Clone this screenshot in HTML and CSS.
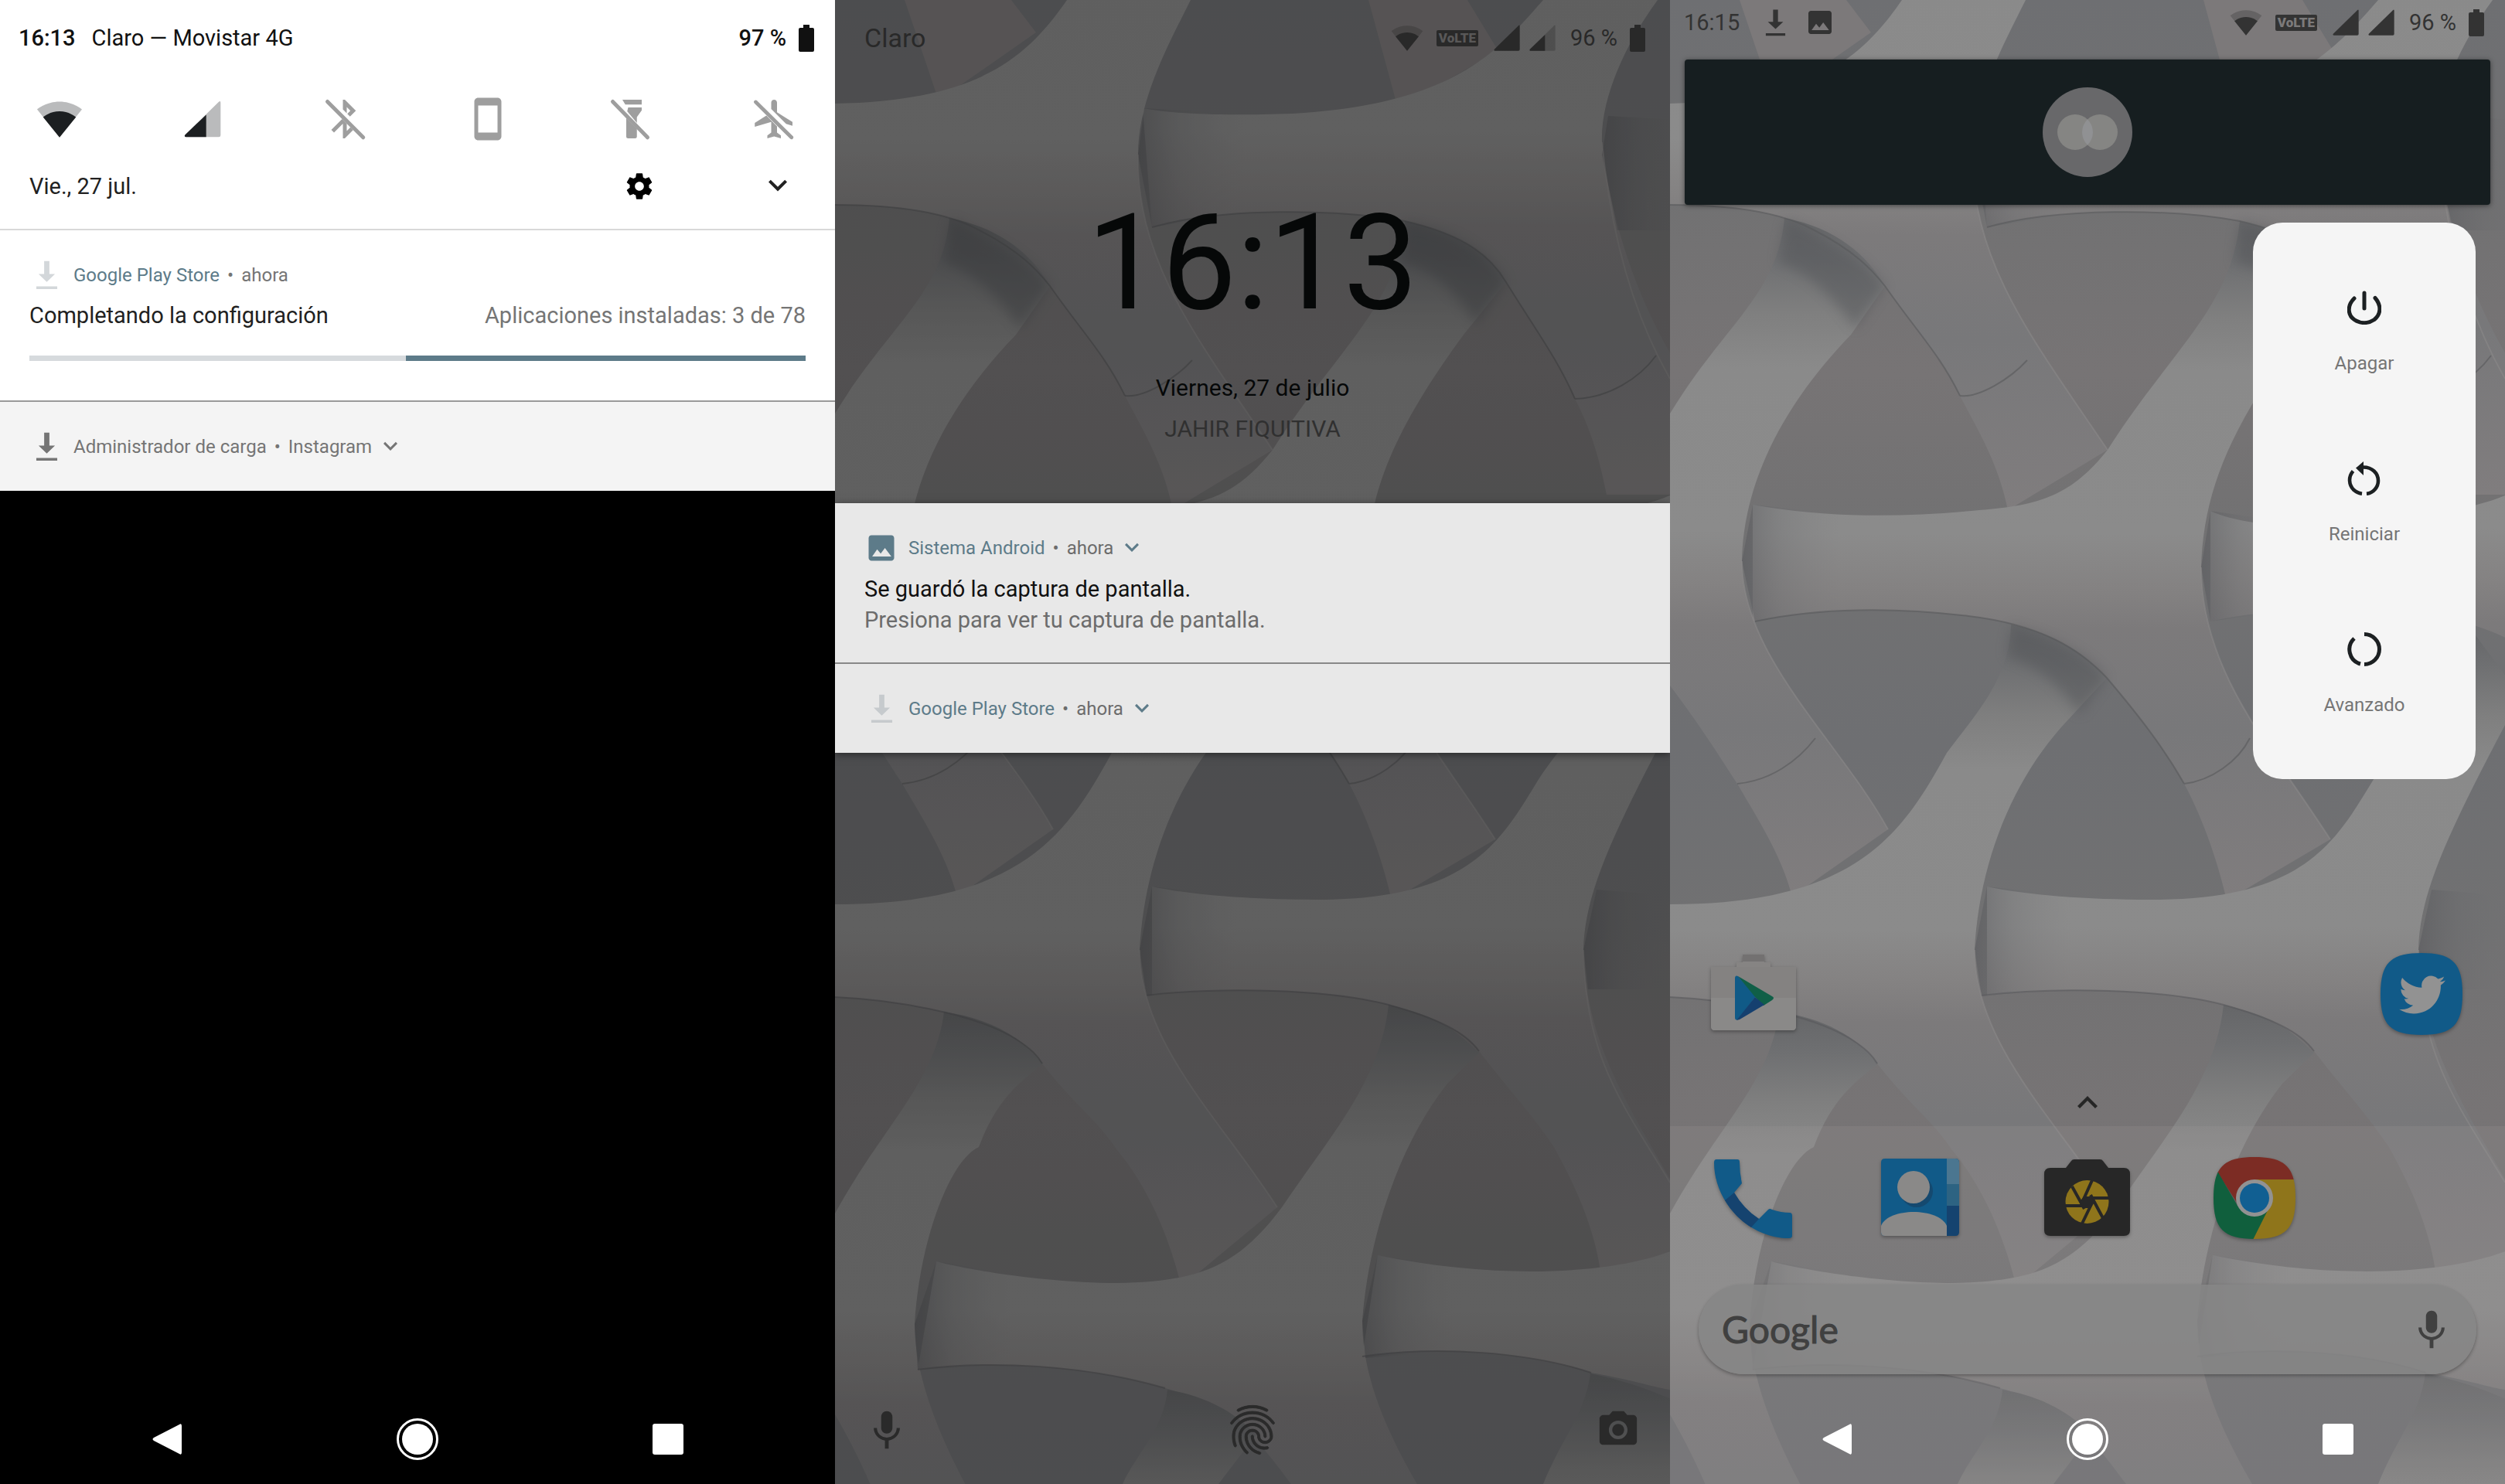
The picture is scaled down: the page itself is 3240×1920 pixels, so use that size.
FILE: index.html
```html
<!DOCTYPE html>
<html lang="es">
<head>
<meta charset="utf-8">
<meta name="viewport" content="width=device-width, initial-scale=1">
<title>Android: notificaciones, bloqueo e inicio</title>
<link rel="stylesheet" href="styles.css">
</head>
<body>
<svg class="sprite" aria-hidden="true">
  <defs>
    <linearGradient id="limb" x1="0" y1="0" x2="0" y2="1">
      <stop offset="0" stop-color="#656668"/>
      <stop offset=".06" stop-color="#6e6f71"/>
      <stop offset=".14" stop-color="#7f7f7f"/>
      <stop offset=".22" stop-color="#8a8a8a"/>
      <stop offset=".46" stop-color="#8b8b8b"/>
      <stop offset=".54" stop-color="#848282"/>
      <stop offset=".6" stop-color="#7c7a7b"/>
      <stop offset=".75" stop-color="#78787a"/>
      <stop offset="1" stop-color="#807d7e"/>
    </linearGradient>
    <linearGradient id="ground" x1="0" y1="0" x2="0" y2="480" gradientUnits="userSpaceOnUse" spreadMethod="reflect">
      <stop offset="0" stop-color="#6e6f72"/>
      <stop offset=".5" stop-color="#717172"/>
      <stop offset="1" stop-color="#777475"/>
    </linearGradient>
    <linearGradient id="joint" x1="0" y1="0" x2="1" y2="0">
      <stop offset="0" stop-color="#55565a" stop-opacity=".5"/>
      <stop offset=".4" stop-color="#66676a" stop-opacity=".25"/>
      <stop offset="1" stop-color="#77777a" stop-opacity="0"/>
    </linearGradient>
    <filter id="soft" x="-10%" y="-10%" width="120%" height="120%"><feGaussianBlur stdDeviation="8"/></filter>
  </defs>

  <symbol id="wallpaper" viewBox="0 0 1080 1920" preserveAspectRatio="xMidYMid slice">
    <rect width="1080" height="1920" fill="url(#ground)"/>
    <g fill="#7c797a">
      <path d="M90 0L134 130L260 42L228 0Z"/>
      <path d="M690 0L728 140L858 66L818 0Z"/>
    </g>
    <g fill="url(#limb)">
      <path d="M1070 -230C1020 -90 970 0 916 0C857 67 800 135 592 147C500 150 440 148 398 140L410 294C500 268 650 270 737 286C820 305 850 335 868 365C905 425 935 465 957 516C980 560 990 600 998 640L1180 640L1180 600C1100 500 1015 380 992 184C990 130 1020 60 1064 0L1190 -230Z"/>
      <path d="M430 -230C380 -100 340 -60 300 0C245 80 180 130 0 134L-60 134V265L0 265C90 265 150 278 185 297C240 325 262 350 278 370C320 430 350 460 375 512C400 560 425 600 437 660L566 582C470 440 390 340 392 200C392 130 430 60 460 0L560 -200Z"/>
      <path d="M1320 280C1280 450 1180 620 1047 652C930 690 760 690 699 661V804C800 780 930 790 1030 806C1110 830 1150 860 1200 980L1330 1155L1300 280Z"/>
      <path d="M737 286C725 400 650 450 566 582C520 640 480 654 400 660C300 670 200 670 107 653V804C200 785 300 787 386 797C480 808 530 840 565 877C610 930 640 970 665 1014C690 1060 710 1120 720 1165L854 1086C780 970 687 870 687 734C690 640 720 560 813 433L868 365C850 335 820 305 737 286Z"/>
      <path d="M148 282C140 380 70 420 0 535L-60 600V870L0 887C40 940 65 980 87 1014C120 1070 145 1110 158 1160L282 1073C220 960 93 850 93 726C95 620 150 520 234 433L278 370C255 330 215 295 148 282Z"/>
      <path d="M1030 806C1020 900 960 930 909 1010C860 1090 820 1165 620 1164C540 1164 460 1158 410 1147V1288C500 1276 640 1280 716 1300C780 1318 815 1335 833 1360C880 1420 900 1440 930 1484C955 1530 985 1590 992 1660L1120 1600C1050 1460 970 1370 968 1229C970 1150 1010 1070 1100 900Z"/>
      <path d="M441 808C440 880 390 930 358 974C300 1080 240 1170 0 1170L-60 1170V1290H0C70 1293 180 1310 235 1345C255 1358 262 1366 268 1376C310 1430 340 1450 365 1488C400 1530 430 1590 448 1665L572 1562C500 1450 394 1350 394 1229C400 1120 440 1010 516 930L565 877C540 848 500 820 441 808Z"/>
      <path d="M1180 1300C1150 1560 1130 1600 1080 1619C1000 1650 850 1655 702 1624L682 1755C780 1740 900 1750 978 1776C1030 1785 1060 1795 1080 1798L1250 2160L1250 1300Z"/>
      <path d="M716 1300C705 1400 640 1470 578 1562C520 1640 470 1658 365 1660C280 1660 180 1645 131 1632L107 1772C200 1760 320 1765 427 1796C520 1820 560 1880 590 1920L690 2160L860 2100C800 1980 682 1850 682 1709C690 1600 730 1480 792 1402L833 1362C800 1330 780 1315 716 1300Z"/>
      <path d="M141 1309C130 1400 60 1460 0 1570L-60 1640V1800L0 1830C40 1900 90 2000 100 2150L300 2140C230 2020 103 1850 103 1713C110 1600 150 1500 186 1484C210 1420 240 1400 269 1376C240 1340 200 1318 141 1309Z"/>
      <path d="M430 1798C425 1850 390 1880 372 1920L250 2300V2660H420C440 2200 460 2000 496 1920L545 1856C510 1820 470 1805 430 1798Z"/>
      <path d="M977 1777C970 1830 940 1860 916 1920L800 2300V2660H1180L1180 1860C1090 1810 1040 1790 977 1777Z"/>
    </g>
    <g fill="url(#joint)">
      <path d="M400 140L392 200L410 294L530 275V147Z"/>
      <path d="M1000 150L992 200L1012 298H1150V158Z"/>
      <path d="M107 653L93 726L110 804L220 788V665Z"/>
      <path d="M699 661L687 734L699 804L810 788V677Z"/>
      <path d="M410 1147L394 1229L403 1288L520 1278V1159Z"/>
      <path d="M985 1151L968 1229L974 1280H1100V1160Z"/>
      <path d="M131 1632L103 1713L107 1772L230 1766V1648Z"/>
      <path d="M702 1624L682 1709L686 1757L800 1748V1640Z"/>
    </g>
    <g class="shade" filter="url(#soft)">
      <path d="M150 284C240 325 262 350 278 370L240 425C200 370 170 350 140 340Z"/>
      <path d="M737 288C820 305 850 335 868 365L830 420C790 360 760 345 730 340Z"/>
      <path d="M441 810C510 830 540 848 565 877L530 925C500 880 470 860 436 850Z"/>
    </g>
    <g class="creases">
      <path d="M0 265C90 265 150 278 185 297C240 325 262 350 278 370C320 430 350 460 375 512"/>
      <path d="M410 294C500 268 650 270 737 286C820 305 850 335 868 365C905 425 935 465 957 516"/>
      <path d="M110 804C200 785 300 787 386 797C480 808 530 840 565 877C610 930 640 970 665 1014"/>
      <path d="M0 1290C70 1293 180 1310 235 1345C255 1358 262 1366 268 1376"/>
      <path d="M403 1288C500 1276 640 1280 716 1300C780 1318 815 1335 833 1360"/>
      <path d="M107 1772C200 1760 320 1765 427 1796"/>
      <path d="M682 1755C780 1740 900 1750 978 1776"/>
      <path d="M375 512C400 515 440 490 462 466M665 1014C700 1010 735 985 750 955M87 1014C130 1010 165 985 188 955M957 516C1000 515 1040 490 1062 460"/>
    </g>
    <g class="glints">
      <path d="M392 200C390 340 470 440 566 582"/>
      <path d="M687 734C687 870 780 970 854 1086"/>
      <path d="M93 726C93 850 220 960 282 1073"/>
      <path d="M394 1229C394 1350 500 1450 572 1562"/>
      <path d="M992 184C1005 320 1040 420 1080 490"/>
      <path d="M968 1229C970 1370 1020 1430 1080 1530"/>
    </g>
  </symbol>

  <symbol id="i-wifi" viewBox="0 0 24 24">
    <path opacity=".3" d="M12 21.5L23.6 7C23.200 6.700 18.700 3 12 3S.8 6.700.4 7z"/>
    <path d="M3.500 11L12 21.500L20.500 11C20 10.600 16.800 8 12 8S4 10.600 3.500 11z"/>
  </symbol>
  <symbol id="i-signal" viewBox="0 0 24 24"><path d="M3 22h18q1 0 1-1V3q0-1.500-1-.5L2.300 20.800Q1.600 22 3 22z"/></symbol>
  <symbol id="i-signal-half" viewBox="0 0 24 24">
    <path opacity=".3" d="M3 22h18q1 0 1-1V3q0-1.500-1-.5L2.300 20.800Q1.600 22 3 22z"/>
    <path d="M14 9.600V22H3q-1.400 0-.7-1.200z"/>
  </symbol>
  <symbol id="i-battery" viewBox="0 0 20 35"><path d="M6 0h8v4h4q2 0 2 2v27q0 2-2 2H2q-2 0-2-2V6q0-2 2-2h4z"/></symbol>
  <symbol id="i-bt-off" viewBox="0 0 24 24">
    <path d="M13 5.830l1.880 1.880-1.600 1.600 1.410 1.410 3.020-3.020L12 2h-1v5.030l2 2zM10.600 12L5 17.590 6.410 19 11 14.410V22h1l4.290-4.290zM13 18.170v-3.760l1.880 1.880z"/>
    <path d="M3 3L21.500 21.500" fill="none" stroke="currentColor" stroke-width="2" stroke-linecap="round"/>
  </symbol>
  <symbol id="i-phone" viewBox="0 0 24 24"><path d="M17 1H7c-1.100 0-2 .9-2 2v18c0 1.100.9 2 2 2h10c1.100 0 2-.9 2-2V3c0-1.100-.9-2-2-2zm0 18H7V5h10z"/></symbol>
  <symbol id="i-torch-off" viewBox="0 0 24 24">
    <path d="M8 2h10v2.500H9.500zM11 6h7v1.500L15.500 11v3L10.500 8zM10 11.500l5.500 5.500V21q0 1-1 1H11q-1 0-1-1z"/>
    <path d="M3 3L21 21.500" fill="none" stroke="currentColor" stroke-width="2" stroke-linecap="round"/>
  </symbol>
  <symbol id="i-plane-off" viewBox="0 0 24 24">
    <path d="M14 8.500V3.500C14 2.670 13.330 2 12.500 2S11 2.670 11 3.500v3.300l7.700 7.700L22 15.500v-2zM8.500 10.200L2.500 14v2l8.500-2.500V19l-2 1.500V22l3.500-1 3.500 1v-1.500L14 19v-3.200z"/>
    <path d="M3 3.200L21.500 21.500" fill="none" stroke="currentColor" stroke-width="1.900" stroke-linecap="round"/>
  </symbol>
  <symbol id="i-gear" viewBox="0 0 24 24"><path d="M19.430 12.980c.04-.32.07-.64.07-.98s-.03-.66-.07-.98l2.110-1.650c.19-.15.24-.42.12-.64l-2-3.460c-.12-.22-.39-.3-.61-.22l-2.490 1c-.52-.4-1.080-.73-1.690-.98l-.38-2.650C14.460 2.180 14.250 2 14 2h-4c-.25 0-.46.18-.49.42l-.38 2.650c-.61.25-1.170.59-1.690.98l-2.490-1c-.23-.09-.49 0-.61.22l-2 3.460c-.13.22-.07.49.12.64l2.110 1.650c-.04.32-.07.65-.07.98s.03.66.07.98l-2.110 1.650c-.19.15-.24.42-.12.64l2 3.460c.12.22.39.3.61.22l2.490-1c.52.4 1.080.73 1.690.98l.38 2.650c.03.24.24.42.49.42h4c.25 0 .46-.18.49-.42l.38-2.650c.61-.25 1.170-.59 1.690-.98l2.490 1c.23.09.49 0 .61-.22l2-3.460c.12-.22.07-.49-.12-.64zM12 15.500c-1.930 0-3.500-1.570-3.500-3.500s1.570-3.500 3.500-3.500 3.500 1.570 3.500 3.500-1.570 3.500-3.500 3.500z"/></symbol>
  <symbol id="i-down" viewBox="0 0 24 24"><path d="M7.410 7.840L12 12.420l4.590-4.580L18 9.250l-6 6-6-6z"/></symbol>
  <symbol id="i-up" viewBox="0 0 24 24"><path d="M7.410 16.160L12 11.580l4.590 4.580L18 14.750l-6-6-6 6z"/></symbol>
  <symbol id="i-download" viewBox="0 0 30 38"><path d="M11.500 0h7v17.500H26L15 28 4 17.500h7.500zM1 34h28v3.500H1z"/></symbol>
  <symbol id="i-image" viewBox="0 0 24 24"><path d="M21 19V5c0-1.100-.9-2-2-2H5c-1.100 0-2 .9-2 2v14c0 1.100.9 2 2 2h14c1.100 0 2-.9 2-2zM5.500 18l3.500-5 2.500 3L14.500 12l4.500 6z"/></symbol>
  <symbol id="i-mic" viewBox="0 0 24 24"><path d="M12 14c1.660 0 3-1.340 3-3V5c0-1.660-1.340-3-3-3S9 3.340 9 5v6c0 1.660 1.340 3 3 3zm5.300-3c0 3-2.540 5.100-5.300 5.100S6.700 14 6.700 11H5c0 3.410 2.720 6.230 6 6.720V22h2v-4.280c3.280-.48 6-3.300 6-6.720z"/></symbol>
  <symbol id="i-finger" viewBox="0 0 24 24"><path stroke="currentColor" stroke-width=".3" d="M17.810 4.470c-.08 0-.16-.02-.23-.06C15.660 3.420 14 3 12.010 3c-1.980 0-3.860.47-5.570 1.410-.24.13-.54.04-.68-.2-.13-.24-.04-.55.2-.68C7.820 2.520 9.860 2 12.010 2c2.130 0 3.990.47 6.030 1.520.25.13.34.43.21.67-.09.18-.26.28-.44.28zM3.500 9.720c-.1 0-.2-.03-.29-.09-.23-.16-.28-.47-.12-.7.99-1.400 2.250-2.500 3.750-3.270C9.980 4.040 14 4.030 17.150 5.650c1.500.77 2.760 1.860 3.750 3.250.16.22.11.54-.12.7-.23.16-.54.11-.7-.12-.9-1.260-2.040-2.250-3.390-2.940-2.870-1.470-6.540-1.470-9.400.01-1.360.7-2.500 1.700-3.400 2.960-.08.14-.23.21-.39.21zm6.250 12.070c-.13 0-.26-.05-.35-.15-.87-.87-1.340-1.430-2.010-2.640-.69-1.230-1.050-2.730-1.050-4.340 0-2.970 2.540-5.390 5.660-5.390s5.660 2.420 5.660 5.390c0 .28-.22.5-.5.5s-.5-.22-.5-.5c0-2.420-2.090-4.390-4.660-4.390-2.570 0-4.660 1.970-4.660 4.390 0 1.440.32 2.770.93 3.850.64 1.150 1.080 1.640 1.850 2.420.19.2.19.51 0 .71-.11.1-.24.15-.37.15zm7.170-1.850c-1.190 0-2.240-.3-3.100-.89-1.490-1.010-2.380-2.650-2.380-4.390 0-.28.22-.5.5-.5s.5.22.5.5c0 1.410.72 2.740 1.940 3.560.71.48 1.540.71 2.540.71.24 0 .64-.03 1.040-.1.27-.05.53.13.58.41.05.27-.13.53-.41.58-.57.11-1.070.12-1.210.12zM14.910 22c-.04 0-.09-.01-.13-.02-1.590-.44-2.630-1.030-3.720-2.100-1.400-1.390-2.170-3.240-2.170-5.220 0-1.620 1.380-2.940 3.080-2.940 1.700 0 3.080 1.320 3.080 2.940 0 1.070.93 1.940 2.080 1.940s2.080-.87 2.080-1.940c0-3.770-3.250-6.830-7.250-6.830-2.840 0-5.440 1.580-6.610 4.030-.39.81-.59 1.760-.59 2.800 0 .78.07 2.010.67 3.610.1.26-.03.55-.29.64-.26.1-.55-.04-.64-.29-.49-1.310-.73-2.610-.73-3.960 0-1.200.23-2.290.68-3.240 1.330-2.790 4.280-4.600 7.510-4.600 4.550 0 8.250 3.510 8.250 7.830 0 1.620-1.380 2.940-3.080 2.940s-3.080-1.320-3.080-2.940c0-1.070-.93-1.940-2.080-1.940s-2.080.87-2.080 1.940c0 1.710.66 3.310 1.870 4.510.95.94 1.860 1.460 3.270 1.850.27.07.42.35.35.61-.05.23-.26.38-.47.38z"/></symbol>
  <symbol id="i-camera" viewBox="0 0 24 22"><path d="M9 1L7.170 3H4c-1.100 0-2 .9-2 2v12c0 1.100.9 2 2 2h16c1.100 0 2-.9 2-2V5c0-1.100-.9-2-2-2h-3.170L15 1zm3 15c-2.760 0-5-2.240-5-5s2.240-5 5-5 5 2.240 5 5-2.240 5-5 5z"/><circle cx="12" cy="11" r="3.200"/></symbol>
  <symbol id="i-power" viewBox="0 0 44 44"><g fill="none" stroke="currentColor" stroke-width="5" stroke-linecap="round"><path d="M22 3v20"/><path d="M9 10C-1 20 1 32 9 37.500C17 43 27 43 35 37.500C43 31 45 20 36 9.500"/></g></symbol>
  <symbol id="i-restart" viewBox="0 0 44 44"><path d="M7.500 12.500C1 20 2 30 8 36.500Q13 41 19 41.800M25 41.800C34 41 40 33 40 25C40 15 32 7.500 21 7.500" fill="none" stroke="currentColor" stroke-width="4.600"/><path d="M21 0V18L11 8.500z"/></symbol>
  <symbol id="i-advanced" viewBox="0 0 44 44"><path d="M22 2.500A19.500 19.500 0 0 1 22 41.500M17 41A19.500 19.500 0 0 1 9 8" fill="none" stroke="currentColor" stroke-width="5"/></symbol>
  <symbol id="i-back" viewBox="0 0 38 40"><path d="M35 1Q38-1 38 3V37Q38 41 35 39L2 22Q-1 20 2 18z"/></symbol>
  <symbol id="i-home" viewBox="0 0 54 54"><circle cx="27" cy="27" r="25.500" fill="none" stroke="currentColor" stroke-width="3"/><circle cx="27" cy="27" r="20"/></symbol>
  <symbol id="i-recent" viewBox="0 0 40 40"><rect width="40" height="40" rx="3"/></symbol>
</svg>

<main class="screens">
  <section class="phone shade-screen" aria-label="Panel de notificaciones">
    <header class="status status-tall">
      <span class="strong">16:13</span><span class="carrier">Claro — Movistar 4G</span>
      <span class="push strong">97 %</span>
      <svg class="battery"><use href="#i-battery"/></svg>
    </header>
    <div class="tiles">
      <button class="tile on" aria-label="Wi-Fi"><svg><use href="#i-wifi"/></svg></button>
      <button class="tile on small" aria-label="Datos móviles"><svg><use href="#i-signal-half"/></svg></button>
      <button class="tile" aria-label="Bluetooth"><svg><use href="#i-bt-off"/></svg></button>
      <button class="tile" aria-label="Rotación"><svg><use href="#i-phone"/></svg></button>
      <button class="tile" aria-label="Linterna"><svg><use href="#i-torch-off"/></svg></button>
      <button class="tile" aria-label="Modo avión"><svg><use href="#i-plane-off"/></svg></button>
    </div>
    <div class="date-row">
      <span>Vie., 27 jul.</span>
      <button class="push" aria-label="Configuración"><svg class="gear"><use href="#i-gear"/></svg></button>
      <button class="expand" aria-label="Expandir"><svg class="chev-lg"><use href="#i-down"/></svg></button>
    </div>
    <article class="note note-progress">
      <div class="note-head"><span class="note-icon"><svg class="dl faint"><use href="#i-download"/></svg></span><span class="app">Google Play Store</span><span>•</span><span>ahora</span></div>
      <div class="note-line"><span class="title">Completando la configuración</span><span class="push">Aplicaciones instaladas: 3 de 78</span></div>
      <div class="bar" role="progressbar" aria-label="Instalación"><div class="bar-fill"></div></div>
    </article>
    <article class="note note-slim note-muted">
      <div class="note-head"><span class="note-icon"><svg class="dl"><use href="#i-download"/></svg></span><span>Administrador de carga</span><span>•</span><span>Instagram</span><svg class="chev"><use href="#i-down"/></svg></div>
    </article>
    <nav class="nav">
      <button aria-label="Atrás"><svg class="n-back"><use href="#i-back"/></svg></button>
      <button aria-label="Inicio"><svg class="n-home"><use href="#i-home"/></svg></button>
      <button aria-label="Recientes"><svg class="n-recent"><use href="#i-recent"/></svg></button>
    </nav>
  </section>

  <section class="phone lock-screen" aria-label="Pantalla de bloqueo">
    <svg class="wall"><use href="#wallpaper"/></svg>
    <header class="status status-tall">
      <span class="lock-carrier">Claro</span>
      <span class="push signals"><svg class="wifi"><use href="#i-wifi"/></svg><span class="volte">VoLTE</span><svg class="sig"><use href="#i-signal"/></svg><svg class="sig"><use href="#i-signal-half"/></svg></span>
      <span>96 %</span>
      <svg class="battery"><use href="#i-battery"/></svg>
    </header>
    <div class="clock">
      <time class="clock-time">16:13</time>
      <p class="clock-date">Viernes, 27 de julio</p>
      <p class="clock-owner">JAHIR FIQUITIVA</p>
    </div>
    <div class="stack">
      <article class="note note-shot">
        <div class="note-head"><span class="note-icon"><svg class="pic"><use href="#i-image"/></svg></span><span class="app">Sistema Android</span><span>•</span><span>ahora</span><svg class="chev app"><use href="#i-down"/></svg></div>
        <p class="note-text title">Se guardó la captura de pantalla.</p>
        <p class="note-text">Presiona para ver tu captura de pantalla.</p>
      </article>
      <article class="note note-slim">
        <div class="note-head"><span class="note-icon"><svg class="dl faint"><use href="#i-download"/></svg></span><span class="app">Google Play Store</span><span>•</span><span>ahora</span><svg class="chev app"><use href="#i-down"/></svg></div>
      </article>
    </div>
    <div class="lock-actions">
      <button aria-label="Asistente de voz"><svg class="lock-mic"><use href="#i-mic"/></svg></button>
      <button aria-label="Huella digital"><svg class="lock-finger"><use href="#i-finger"/></svg></button>
      <button aria-label="Cámara"><svg class="lock-cam"><use href="#i-camera"/></svg></button>
    </div>
  </section>

  <section class="phone home-screen" aria-label="Pantalla de inicio">
    <svg class="wall"><use href="#wallpaper"/></svg>
    <header class="status">
      <span>16:15</span>
      <svg class="mini-dl"><use href="#i-download"/></svg>
      <svg class="mini-pic"><use href="#i-image"/></svg>
      <span class="push signals"><svg class="wifi"><use href="#i-wifi"/></svg><span class="volte">VoLTE</span><svg class="sig"><use href="#i-signal"/></svg><svg class="sig"><use href="#i-signal"/></svg></span>
      <span>96 %</span>
      <svg class="battery"><use href="#i-battery"/></svg>
    </header>
    <div class="widget">
      <svg class="widget-logo" viewBox="0 0 116 116" aria-hidden="true"><circle cx="58" cy="58" r="58" fill="#68686a"/><circle cx="42" cy="58" r="23" fill="#858583"/><circle cx="74" cy="58" r="23" fill="#858583"/><path d="M58 41.500A23 23 0 0 1 58 74.500A23 23 0 0 1 58 41.500z" fill="#909193"/></svg>
    </div>
    <div class="power-menu">
      <button><svg class="pm-icon"><use href="#i-power"/></svg><span>Apagar</span></button>
      <button><svg class="pm-icon"><use href="#i-restart"/></svg><span>Reiniciar</span></button>
      <button><svg class="pm-icon"><use href="#i-advanced"/></svg><span>Avanzado</span></button>
    </div>

    <div class="apps apps-page">
      <a href="#play" aria-label="Play Store"><svg class="app-icon" viewBox="0 0 112 112">
        <path d="M34 23V16h8V6h28v10h8v7z" fill="#868483"/>
        <path d="M42 6h28v9H42z" fill="#737171"/>
        <path d="M1 22h110v77q0 5-5 5H6q-5 0-5-5z" fill="#848281"/>
        <path d="M1 62h110v37q0 5-5 5H6q-5 0-5-5z" fill="#8a8988"/>
        <path d="M32 37q0-5 4-3L59 60 36 90q-4 2-4-3z" fill="#105a87"/>
        <path d="M36 34L80 60q4 2 0 5L69 72 59 62z" fill="#105f47"/>
        <path d="M34 91L58 61L70 71L38 90z" fill="#15406f"/>
      </svg></a>
      <a class="last" href="#twitter" aria-label="Twitter"><svg class="app-icon" viewBox="0 0 112 112">
        <path d="M56 4C96 4 109 17 109 57S96 110 56 110S3 97 3 57S16 4 56 4z" fill="#115a88"/>
        <path fill="#929292" transform="translate(27 28) scale(2.500)" d="M23.953 4.570a10 10 0 01-2.825.775 4.958 4.958 0 002.163-2.723c-.951.555-2.005.959-3.127 1.184a4.920 4.920 0 00-8.384 4.482C7.690 8.095 4.067 6.130 1.640 3.162a4.822 4.822 0 00-.666 2.475c0 1.710.87 3.213 2.188 4.096a4.904 4.904 0 01-2.228-.616v.06a4.923 4.923 0 003.946 4.827 4.996 4.996 0 01-2.212.085 4.936 4.936 0 004.604 3.417 9.867 9.867 0 01-6.102 2.105c-.39 0-.779-.023-1.170-.067a13.995 13.995 0 007.557 2.209c9.053 0 13.998-7.496 13.998-13.985 0-.21 0-.42-.015-.63A9.935 9.935 0 0024 4.590z"/>
      </svg></a>
    </div>
    <button class="drawer" aria-label="Todas las aplicaciones"><svg class="chev-up"><use href="#i-up"/></svg></button>

    <div class="dock">
      <div class="apps">
        <a href="#telefono" aria-label="Teléfono"><svg class="app-icon" viewBox="0 0 112 112">
          <path d="M8 6H35Q38 6 38 9Q38 23 41 37L31 49Q43 70 63 83L75 71Q77 69 80 71Q92 75 103 75Q106 75 106 79V105Q106 108 102 108C50 108 5 62 5 10Q5 6 8 6z" fill="#115a88"/>
          <path d="M31 49Q43 70 63 83L53 94Q32 81 19 59z" fill="#15436f"/>
        </svg></a>
        <a href="#contactos" aria-label="Contactos"><svg class="app-icon" viewBox="0 0 112 112">
          <path d="M90 5h11q5 0 5 5v90q0 5-5 5H90z" fill="#15436f"/>
          <path d="M90 5h11q5 0 5 5v38H90z" fill="#4b7690"/><path d="M90 38h16v28H90z" fill="#2d6382"/>
          <path d="M10 5H90V105H10q-5 0-5-5V10q0-5 5-5z" fill="#115a88"/>
          <circle cx="51" cy="47" r="21" fill="#15496f"/><circle cx="47" cy="42" r="21" fill="#8a8988"/>
          <path d="M5 92C14 68 80 68 90 92V105H10q-5 0-5-5z" fill="#8a8988"/>
        </svg></a>
        <a href="#camara" aria-label="Cámara"><svg class="app-icon" viewBox="0 0 112 112">
          <path d="M8 17H28L35 8Q36 6 39 6H72Q75 6 76 8L83 17H103Q111 17 111 25V98Q111 105 103 105H8Q0 105 0 98V25Q0 17 8 17z" fill="#272727"/>
          <circle cx="55.500" cy="61" r="28" fill="#8f751b"/>
          <path d="M62 33L49 62M84 56H53M76 82L60 52M49 89L63 60M27 66H57M36 41L52 70" stroke="#272727" stroke-width="4"/>
          <path d="M51 54h9l5 7-5 8h-9l-5-8z" fill="#272727"/>
        </svg></a>
        <a href="#chrome" aria-label="Chrome"><svg class="app-icon" viewBox="0 0 112 112">
          <clipPath id="squircle"><path d="M56 3C96 3 109 16 109 56S96 109 56 109S3 96 3 56S16 3 56 3z"/></clipPath>
          <g clip-path="url(#squircle)">
            <path d="M0 0H112V32H56L36 66L6 20z" fill="#7c2c24"/>
            <path d="M56 32H112V112H51L76 66z" fill="#8f751b"/>
            <path d="M0 14L8 21L34 66Q44 80 76 66L53 112H0z" fill="#105f3d"/>
          </g>
          <circle cx="56" cy="56" r="24" fill="#929292"/><circle cx="56" cy="56" r="19" fill="#115f92"/>
        </svg></a>
      </div>
      <form class="search" role="search">
        <label class="search-brand" for="q">Google</label>
        <input id="q" type="text">
        <button type="button" aria-label="Buscar por voz"><svg class="search-mic"><use href="#i-mic"/></svg></button>
      </form>
      <nav class="nav">
        <button aria-label="Atrás"><svg class="n-back"><use href="#i-back"/></svg></button>
        <button aria-label="Inicio"><svg class="n-home"><use href="#i-home"/></svg></button>
        <button aria-label="Recientes"><svg class="n-recent"><use href="#i-recent"/></svg></button>
      </nav>
    </div>
  </section>
</main>
</body>
</html>
```
FILE: styles.css
```css
* { box-sizing: border-box; }
body { margin: 0; font-family: Roboto, "Noto Sans", sans-serif; font-size: 29px; line-height: 40px; color: #212121; background: #000; }
p { margin: 0; }
svg { display: block; fill: currentColor; flex: none; }
button { display: block; padding: 0; border: 0; background: none; color: inherit; font: inherit; }
.sprite { position: absolute; width: 0; height: 0; }

.screens { display: grid; grid-template-columns: repeat(3, 1fr); min-height: 100vh; }
.phone { position: relative; display: flex; flex-direction: column; isolation: isolate; overflow: hidden; }
.wall { position: absolute; inset: 0; width: 100%; height: 100%; z-index: -1; }
.creases { fill: none; stroke: #58595b; stroke-width: 2; opacity: .6; }
.glints { fill: none; stroke: #8d8b8b; stroke-width: 2; opacity: .5; }
.shade { fill: #505155; opacity: .45; }

.push { margin-left: auto; }
.strong { font-weight: 500; }

/* status bar */
.status { display: flex; align-items: center; height: 60px; padding: 0 27px 2px 18px; color: #333; }
.status-tall { height: 100px; padding-left: 24px; }
.battery { width: 20px; height: 35px; margin-left: 16px; }
.signals { display: flex; align-items: center; margin-right: 16px; }
.wifi { width: 42px; height: 42px; }
.sig { width: 40px; height: 40px; margin-left: 6px; }
.volte { margin: 0 11px 0 17px; padding: 0 3px; border-radius: 2px; background: #333; color: #7c7a7a; font-size: 17px; line-height: 21px; font-weight: 900; }

/* notification shade */
.shade-screen { background: #000; }
.shade-screen > .status, .tiles, .date-row { background: #fff; }
.shade-screen > .status { color: #111; }
.carrier { margin-left: 21px; }
.tiles { display: flex; justify-content: space-between; height: 108px; padding: 0 50px 0 47px; align-items: center; }
.tile { display: flex; justify-content: center; width: 60px; color: #9e9e9e; }
.tile svg { width: 60px; height: 60px; }
.tile.on { color: #1c1f21; }
.tile.small svg { width: 56px; height: 56px; }
.date-row { display: flex; align-items: center; height: 90px; padding: 0 50px 22px 38px; border-bottom: 2px solid #d8d8d8; }
.gear { width: 40px; height: 40px; color: #000; }
.expand { margin-left: 135px; }
.chev-lg { width: 48px; height: 48px; }

.note { padding: 34px 38px 0; background: #fff; color: #757575; }
.note-head { display: flex; align-items: center; gap: 10px; height: 48px; font-size: 24px; }
.note-icon { display: flex; justify-content: center; width: 44px; margin-right: 3px; }
.app { color: #5d7b89; }
.dl { width: 29px; height: 38px; }
.dl.faint { color: #d3d7da; }
.pic { width: 44px; height: 44px; color: #5d7b89; }
.chev { width: 36px; height: 36px; margin-left: -4px; }
.note-line { display: flex; margin-top: 8px; }
.title { color: #212121; }
.bar { height: 7px; margin-top: 32px; background: #d6dadd; }
.bar-fill { height: 100%; width: 51.5%; margin-left: auto; background: #5d7b89; }
.note-progress { height: 222px; border-bottom: 2px solid #9a9a9a; }
.note-slim { height: 115px; }
.note-muted { background: #f4f4f4; }

/* lock screen */
.lock-screen .wall { filter: brightness(.69); }
.lock-screen .status { padding-left: 38px; padding-right: 32px; color: #292929; }
.lock-screen .volte { background: #292929; color: #595858; }
.lock-carrier { font-size: 34px; }
.clock { display: flex; flex-direction: column; align-items: center; height: 551px; padding-top: 140px; }
.clock-time { font-size: 172px; line-height: 200px; color: #060808; }
.clock-date { margin-top: 42px; font-size: 30px; color: #060808; }
.clock-owner { margin-top: 13px; font-size: 30px; color: #303030; }
.stack { box-shadow: 0 2px 10px rgba(0, 0, 0, .5); }
.stack .note { background: #e8e8e8; color: #6c6c6c; }
.note-shot { height: 208px; border-bottom: 2px solid #888; }
.note-shot .title { margin-top: 9px; }
.note-text.title { color: #111; }
.stack .dl.faint { color: #c6cacd; }
.lock-actions { display: flex; align-items: center; justify-content: space-between; margin-top: auto; padding: 0 38px 32px; color: #2a2a2a; }
.lock-mic { width: 58px; height: 58px; }
.lock-finger { width: 76px; height: 76px; }
.lock-cam { width: 58px; height: 54px; }

/* home screen */
.mini-dl { width: 27px; height: 35px; margin-left: 33px; }
.mini-pic { width: 40px; height: 40px; margin-left: 24px; }
.widget { display: flex; justify-content: center; margin: 17px 19px 0; padding: 36px 0; border-radius: 4px; background: #161e20; box-shadow: 0 1px 6px rgba(0, 0, 0, .5); }
.widget-logo { width: 116px; height: 116px; }
.power-menu { position: absolute; top: 288px; right: 38px; width: 288px; padding: 88px 0 80px; border-radius: 38px; background: #f5f5f5; color: #757575; font-size: 24px; line-height: 32px; display: grid; gap: 111px; }
.power-menu button { display: grid; justify-items: center; gap: 34px; }
.pm-icon { width: 44px; height: 44px; color: #1c2022; }
.apps { display: grid; grid-template-columns: repeat(5, 1fr); justify-items: center; }
.apps-page { margin-top: auto; }
.last { grid-column: 5; }
.app-icon { width: 112px; height: 112px; filter: drop-shadow(0 2px 2px rgba(0, 0, 0, .3)); }
.drawer { align-self: center; margin: 58px 0 6px; color: #262626; }
.chev-up { width: 52px; height: 52px; }
.dock { padding-top: 37px; background: rgba(160, 155, 155, .2); }
.search { display: flex; align-items: center; height: 116px; margin: 56px 37px 26px; padding: 0 29px 0 30px; border-radius: 58px; background: rgba(134, 134, 134, .85); box-shadow: 0 2px 4px rgba(0, 0, 0, .3); color: #404040; }
.search-brand { font-family: Lato, sans-serif; font-size: 48px; line-height: 60px; -webkit-text-stroke: 1px #404040; }
.search input { flex: 1; min-width: 0; border: 0; background: none; font: inherit; }
.search-mic { width: 58px; height: 58px; }

.nav { display: flex; align-items: center; justify-content: center; gap: 270px; height: 116px; color: #fff; }
.shade-screen .nav { margin-top: auto; }
.nav button { width: 54px; display: flex; justify-content: center; }
.n-back { width: 38px; height: 40px; }
.n-home { width: 54px; height: 54px; }
.n-recent { width: 40px; height: 40px; }
```
